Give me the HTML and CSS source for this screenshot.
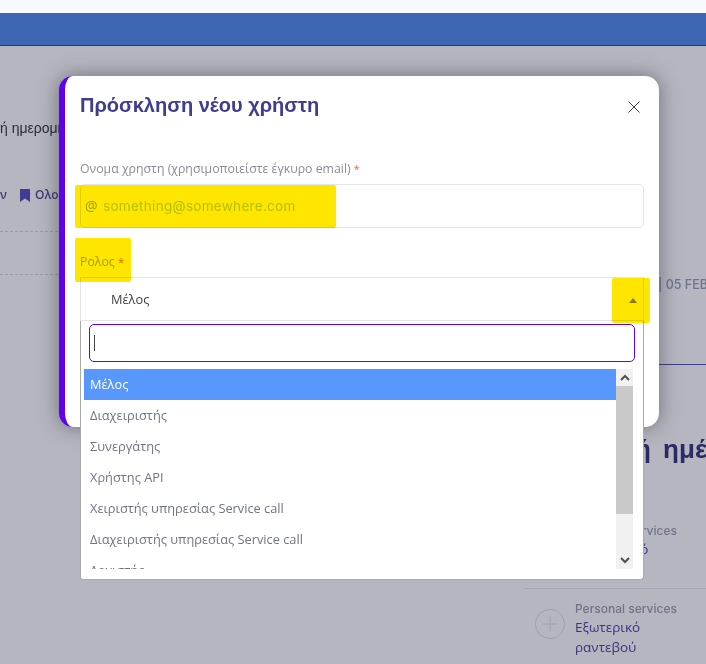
FILE: index.html
```html
<!DOCTYPE html>
<html lang="el">
<head>
<meta charset="utf-8">
<title>Πρόσκληση νέου χρήστη</title>
<link rel="stylesheet" href="styles.css">
</head>
<body>
<div class="page">
  <div class="topbar"><span class="topbar-text">n</span></div>
  <header class="brandbar"></header>
  <main class="backdrop">
    <section class="col-left">
      <p class="intro">ή ημερομηνία</p>
      <div class="filters">
        <span class="filter-end">ν</span>
        <svg class="bookmark" viewBox="0 0 10 13" aria-hidden="true"><path d="M0 0H10V13L5 9.5 0 13Z"/></svg>
        <span class="filter-all">Ολοι</span>
      </div>
      <div class="dash dash-first"></div>
      <div class="dash dash-second"></div>
    </section>
    <section class="col-right">
      <div class="date">| 05 FEB</div>
      <div class="rule"></div>
      <h2 class="day-title">ή ημέρας</h2>
      <div class="service service-first">
        <div class="service-text">
          <div class="service-kind">Personal services</div>
          <div class="service-name">Προσωπικό</div>
        </div>
      </div>
      <div class="service-sep"></div>
      <div class="service service-second">
        <svg class="plus" viewBox="0 0 32 32" aria-hidden="true"><circle cx="16" cy="16" r="14.6"/><path d="M16 8.5V23.5M8.5 16H23.5"/></svg>
        <div class="service-text">
          <div class="service-kind">Personal services</div>
          <div class="service-name">Εξωτερικό<br>ραντεβού</div>
        </div>
      </div>
    </section>
  </main>

  <div class="modal">
    <div class="modal-head">
      <h1 class="modal-title">Πρόσκληση νέου χρήστη</h1>
      <svg class="close" viewBox="0 0 12 12" aria-hidden="true"><path d="M.5.5 11.5 11.5M11.5.5.5 11.5"/></svg>
    </div>
    <label class="label label-user">Ονομα χρηστη (χρησιμοποιείστε έγκυρο email) <span class="req">*</span></label>
    <div class="field">
      <span class="at">@</span>
      <span class="placeholder">something@somewhere.com</span>
    </div>
    <label class="label label-role">Ρολος <span class="req">*</span></label>
    <div class="select">
      <span class="select-value">Μέλος</span>
      <span class="caret"></span>
    </div>
    <div class="dropdown">
      <div class="search"><span class="cursor"></span></div>
      <div class="list-wrap">
        <ul class="options">
          <li class="option option-active">Μέλος</li>
          <li class="option">Διαχειριστής</li>
          <li class="option">Συνεργάτης</li>
          <li class="option">Χρήστης API</li>
          <li class="option">Χειριστής υπηρεσίας Service call</li>
          <li class="option">Διαχειριστής υπηρεσίας Service call</li>
          <li class="option">Λογιστής</li>
        </ul>
        <div class="scrollbar">
          <div class="scroll-btn"><svg viewBox="0 0 10 7" aria-hidden="true"><path d="M1 6 5 2 9 6"/></svg></div>
          <div class="scroll-thumb"></div>
          <div class="scroll-track"></div>
          <div class="scroll-btn"><svg viewBox="0 0 10 7" aria-hidden="true"><path d="M1 1 5 5 9 1"/></svg></div>
        </div>
      </div>
    </div>
  </div>

  <div class="mark mark-email"></div>
  <div class="mark mark-role"></div>
  <div class="mark mark-caret"></div>
</div>
</body>
</html>
```

FILE: styles.css
```css
* { box-sizing: border-box; }
html, body { margin: 0; padding: 0; }
body { width: 706px; height: 664px; overflow: hidden; font-family: "Open Sans", "Noto Sans", sans-serif; }

.page { position: relative; width: 706px; height: 664px; overflow: hidden; display: flex; flex-direction: column; background: #b6b6c0; }

.topbar { height: 13px; background: #f9faff; overflow: hidden; flex: none; }
.topbar-text { display: block; margin: -13px 0 0 1px; font: 12px/16px "Liberation Sans", sans-serif; color: #3d66b5; }
.brandbar { height: 33px; flex: none; background: #3d66b5; border-bottom: 1px solid #1f3a86; }

.backdrop { flex: 1; display: flex; min-height: 0; }
.col-left { width: 524px; flex: none; overflow: hidden; }
.intro { margin: 72px 0 0; font: 14px/20px "Liberation Sans", sans-serif; color: #2b2b3a; white-space: nowrap; }
.filters { display: flex; align-items: center; margin-top: 49px; height: 16px; font: 600 12px/16px "Open Sans", sans-serif; color: #3c3c74; }
.filter-end { width: 20px; }
.bookmark { width: 10px; height: 13px; fill: #3f3d8f; margin-right: 5px; }
.dash { border-top: 1px dashed #9a9aa6; }
.dash-first { margin-top: 28px; }
.dash-second { margin-top: 42px; }

.col-right { flex: 1; min-width: 0; overflow: hidden; }
.date { margin: 231px 0 0 134px; font: 500 12.5px/16px Inter, sans-serif; color: #6c7390; white-space: nowrap; }
.rule { margin-top: 71px; border-top: 1px solid #3f3d8f; }
.day-title { margin: 69px 0 0 111px; font: 700 26px/30px "Liberation Sans", sans-serif; word-spacing: 5px; color: #2a2a66; white-space: nowrap; }
.service { display: flex; }
.service-first { margin-top: 59px; padding-left: 51px; height: 50px; }
.service-sep { margin-top: 15px; border-top: 1px solid #a6a6b4; }
.service-second { margin-top: 12px; padding-left: 10px; }
.service-text { display: flex; flex-direction: column; }
.service-kind { font: 500 12px/16px Inter, sans-serif; color: #6f7488; white-space: nowrap; }
.service-name { font: 13.5px/20px "Open Sans", sans-serif; color: #37357f; white-space: nowrap; }
.plus { width: 32px; height: 32px; margin: 7px 9px 0 0; flex: none; fill: none; stroke: #a0a0ae; stroke-width: 1; }

.modal { position: absolute; left: 59px; top: 76px; width: 600px; height: 351px; padding: 16px 15px 0; background: #fff; border-left: 6px solid #6200ee; border-radius: 14px; box-shadow: 0 0 20px rgba(40, 40, 50, .5); display: flex; flex-direction: column; }
.modal-head { display: flex; align-items: center; justify-content: space-between; height: 26px; flex: none; padding-right: 4px; }
.modal-title { margin: 0; font: 700 20px/26px "Liberation Sans", sans-serif; color: #3f3d8f; }
.close { width: 12px; height: 12px; margin-top: 4px; fill: none; stroke: #3c3c50; stroke-width: 1; }

.label { display: block; font-size: 12.3px; line-height: 20px; color: #8a8b9b; flex: none; }
.label-user { margin-top: 41px; }
.label-role { margin-top: 24px; color: #a5b0c0; }
.req { color: #f0654f; font-size: 11px; }

.field { display: flex; align-items: center; height: 44px; margin-top: 5px; padding-left: 4px; flex: none; border: 1px solid #e2e5ec; border-radius: 5px; background: #fff; }
.at { font: 14px/20px "Open Sans", sans-serif; color: #9ab0b0; width: 18px; }
.placeholder { font: 13.5px/20px Inter, sans-serif; letter-spacing: .3px; color: #b5d5d0; }

.select { display: flex; align-items: center; justify-content: space-between; height: 44px; margin-top: 5px; padding: 0 6px 0 30px; flex: none; border: 1px solid #e2e5ec; background: #fff; }
.select-value { font-size: 12.8px; line-height: 20px; color: #3f3f46; }
.caret { width: 0; height: 0; margin: 3px 0 0; border-left: 4px solid transparent; border-right: 4px solid transparent; border-bottom: 5px solid #888; }

.dropdown { position: absolute; left: 15px; top: 245px; width: 564px; height: 259px; padding: 3px 10px 10px 3px; background: #fff; border: 1px solid #aaa; border-top: 0; border-radius: 0 0 3px 3px; display: flex; flex-direction: column; }
.search { flex: none; height: 38px; margin: 0 -2px 0 5px; display: flex; align-items: center; padding-left: 4px; border: 1.5px solid #6200ee; border-radius: 5px; background: #fff; }
.cursor { width: 1px; height: 16px; background: #444; }
.list-wrap { display: flex; height: 200px; margin-top: 7px; flex: none; }
.options { flex: 1; margin: 0; padding: 0; list-style: none; overflow: hidden; }
.option { display: flex; align-items: center; height: 31px; padding: 0 6px 2px; font-size: 12.8px; color: #6f7488; white-space: nowrap; }
.option-active { background: #5897fb; color: #fff; }
.scrollbar { width: 17px; flex: none; display: flex; flex-direction: column; background: #f1f1f1; }
.scroll-btn { height: 17px; flex: none; display: flex; align-items: center; justify-content: center; }
.scroll-btn svg { width: 10px; height: 7px; fill: none; stroke: #505050; stroke-width: 2; }
.scroll-thumb { height: 128px; flex: none; background: #c9c9c9; }
.scroll-track { flex: 1; }

.mark { position: absolute; background: #ffe600; mix-blend-mode: multiply; border-radius: 2px; }
.mark-email { left: 75px; top: 185px; width: 261px; height: 43px; }
.mark-role { left: 75px; top: 238px; width: 56px; height: 44px; }
.mark-caret { left: 612px; top: 278px; width: 38px; height: 45px; }
```
